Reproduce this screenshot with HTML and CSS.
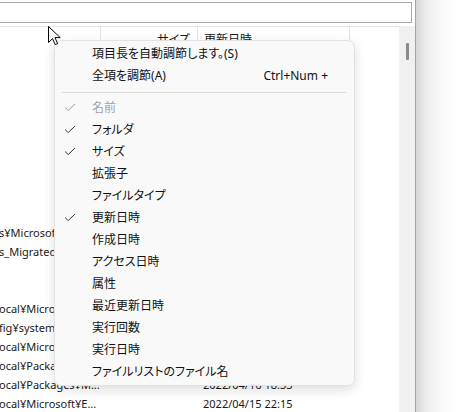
FILE: index.html
```html
<!DOCTYPE html>
<html lang="ja">
<head>
<meta charset="utf-8">
<link rel="stylesheet" href="styles.css">
</head>
<body>
<div class="screen">
  <div class="window">
    <div class="pathbar"></div>
    <div class="listarea">
      <div class="list">
        <div class="header">
          <div class="c-name"></div>
          <div class="c-size">サイズ</div>
          <div class="c-date">更新日時</div>
          <div class="c-extra"></div>
        </div>
        <div class="row"><div class="c-name"></div><div class="c-size"></div><div class="c-date"></div><div class="c-extra"></div></div>
        <div class="row"><div class="c-name"></div><div class="c-size"></div><div class="c-date"></div><div class="c-extra"></div></div>
        <div class="row"><div class="c-name"></div><div class="c-size"></div><div class="c-date"></div><div class="c-extra"></div></div>
        <div class="row"><div class="c-name"></div><div class="c-size"></div><div class="c-date"></div><div class="c-extra"></div></div>
        <div class="row"><div class="c-name"></div><div class="c-size"></div><div class="c-date"></div><div class="c-extra"></div></div>
        <div class="row"><div class="c-name"></div><div class="c-size"></div><div class="c-date"></div><div class="c-extra"></div></div>
        <div class="row"><div class="c-name"></div><div class="c-size"></div><div class="c-date"></div><div class="c-extra"></div></div>
        <div class="row"><div class="c-name"></div><div class="c-size"></div><div class="c-date"></div><div class="c-extra"></div></div>
        <div class="row"><div class="c-name"></div><div class="c-size"></div><div class="c-date"></div><div class="c-extra"></div></div>
        <div class="row"><div class="c-name"><span>s¥Microsoft.W...</span></div><div class="c-size"></div><div class="c-date"></div><div class="c-extra"></div></div>
        <div class="row"><div class="c-name"><span>s_Migrated...</span></div><div class="c-size"></div><div class="c-date"></div><div class="c-extra"></div></div>
        <div class="row"><div class="c-name"></div><div class="c-size"></div><div class="c-date"></div><div class="c-extra"></div></div>
        <div class="row"><div class="c-name"></div><div class="c-size"></div><div class="c-date"></div><div class="c-extra"></div></div>
        <div class="row"><div class="c-name"><span>ocal¥Microsoft¥W...</span></div><div class="c-size"></div><div class="c-date"></div><div class="c-extra"></div></div>
        <div class="row"><div class="c-name"><span>fig¥systemprofile</span></div><div class="c-size"></div><div class="c-date"></div><div class="c-extra"></div></div>
        <div class="row"><div class="c-name"><span>ocal¥Microsoft¥O...</span></div><div class="c-size"></div><div class="c-date"></div><div class="c-extra"></div></div>
        <div class="row"><div class="c-name"><span>ocal¥Packages¥M...</span></div><div class="c-size"></div><div class="c-date"></div><div class="c-extra"></div></div>
        <div class="row"><div class="c-name"><span>ocal¥Packages¥M...</span></div><div class="c-size"></div><div class="c-date">2022/04/16 18:33</div><div class="c-extra"></div></div>
        <div class="row"><div class="c-name"><span>ocal¥Microsoft¥E...</span></div><div class="c-size"></div><div class="c-date">2022/04/15 22:15</div><div class="c-extra"></div></div>
      </div>
      <div class="scrollbar"><div class="thumb"></div></div>
    </div>
  </div>
  <div class="shadow"></div>
</div>

<div class="menu">
  <div class="item"><span class="check"></span><span class="label">項目長を自動調節します。(S)</span></div>
  <div class="item"><span class="check"></span><span class="label">全項を調節(A)</span><span class="key">Ctrl+Num +</span></div>
  <div class="sep"></div>
  <div class="item disabled"><span class="check"><svg viewBox="0 0 12 9" width="12" height="9"><path d="M1 4.5 L4.2 7.6 L11 1" fill="none" stroke="currentColor" stroke-width="1"/></svg></span><span class="label">名前</span></div>
  <div class="item"><span class="check"><svg viewBox="0 0 12 9" width="12" height="9"><path d="M1 4.5 L4.2 7.6 L11 1" fill="none" stroke="currentColor" stroke-width="1"/></svg></span><span class="label">フォルダ</span></div>
  <div class="item"><span class="check"><svg viewBox="0 0 12 9" width="12" height="9"><path d="M1 4.5 L4.2 7.6 L11 1" fill="none" stroke="currentColor" stroke-width="1"/></svg></span><span class="label">サイズ</span></div>
  <div class="item"><span class="check"></span><span class="label">拡張子</span></div>
  <div class="item"><span class="check"></span><span class="label">ファイルタイプ</span></div>
  <div class="item"><span class="check"><svg viewBox="0 0 12 9" width="12" height="9"><path d="M1 4.5 L4.2 7.6 L11 1" fill="none" stroke="currentColor" stroke-width="1"/></svg></span><span class="label">更新日時</span></div>
  <div class="item"><span class="check"></span><span class="label">作成日時</span></div>
  <div class="item"><span class="check"></span><span class="label">アクセス日時</span></div>
  <div class="item"><span class="check"></span><span class="label">属性</span></div>
  <div class="item"><span class="check"></span><span class="label">最近更新日時</span></div>
  <div class="item"><span class="check"></span><span class="label">実行回数</span></div>
  <div class="item"><span class="check"></span><span class="label">実行日時</span></div>
  <div class="item"><span class="check"></span><span class="label">ファイルリストのファイル名</span></div>
</div>

<svg class="cursor" viewBox="0 0 13 20" width="13" height="20"><path d="M0.5 0.5 L0.5 16.5 L4.5 12.6 L7.2 18.6 L9.6 17.6 L7 11.6 L12.2 11.6 Z" fill="#fff" stroke="#000" stroke-width="1" stroke-linejoin="round"/></svg>
</body>
</html>
```

FILE: styles.css
```css
html, body {
  margin: 0;
  padding: 0;
  background: #fff;
}
body {
  width: 467px;
  height: 412px;
  overflow: hidden;
  position: relative;
  font-family: "Noto Sans", "Noto Sans CJK JP", sans-serif;
  font-size: 12px;
  color: #1a1a1a;
  font-feature-settings: "palt";
}
.screen {
  display: flex;
  height: 412px;
}
.window {
  width: 415px;
  border-right: 1px solid #a3a3a3;
  display: flex;
  flex-direction: column;
  background: #fff;
}
.pathbar {
  height: 19px;
  margin: 2px 3px 3px -2px;
  border: 1px solid #a8a8a8;
  background: #fff;
}
.listarea {
  flex: 1;
  display: flex;
  min-height: 0;
}
.list {
  flex: 1;
  overflow: hidden;
}
.scrollbar {
  width: 16px;
  background: #f0f0f0;
  display: flex;
  justify-content: center;
  padding-top: 17px;
}
.thumb {
  width: 3px;
  height: 17px;
  background: #8a8a8a;
  border-radius: 1px;
  margin-left: 1px;
}
.header {
  display: flex;
  height: 25px;
  border-top: 1px solid #e4e4e4;
  align-items: stretch;
}
.header > div {
  border-right: 1px solid #e4e4e4;
  line-height: 25px;
  white-space: nowrap;
}
.header > .c-extra { border-right: none; }
.row {
  display: flex;
  height: 19px;
  line-height: 19px;
  white-space: nowrap;
  font-size: 11px;
}
.c-name {
  width: 100px;
  flex: none;
  overflow: hidden;
}
.c-name span {
  display: block;
  margin-left: -1px;
}
.c-size {
  width: 97px;
  flex: none;
  text-align: right;
  padding-right: 7px;
  box-sizing: border-box;
}
.c-date {
  width: 152px;
  flex: none;
  padding-left: 6px;
  box-sizing: border-box;
}
.c-extra {
  flex: 1;
}
.shadow {
  flex: 1;
  background: linear-gradient(to right, #d6d6d6 0px, #ececec 10px, #f8f8f8 22px, #fff 40px);
}

/* context menu */
.menu {
  position: absolute;
  left: 54px;
  top: 40px;
  width: 299px;
  padding: 1px 0 3px;
  background: #f9f9f9;
  border: 1px solid #e2e2e2;
  border-radius: 7px;
  box-shadow: 0 4px 12px rgba(0, 0, 0, 0.13);
}
.item {
  display: flex;
  align-items: center;
  height: 22px;
  color: #111;
}
.item .check {
  width: 37px;
  flex: none;
  display: flex;
  justify-content: flex-start;
  padding-left: 9px;
  box-sizing: border-box;
  color: #333;
}
.item .check svg { display: block; }
.item .label {
  flex: 1;
  white-space: nowrap;
}
.item .key {
  padding-right: 26px;
  white-space: nowrap;
}
.item.disabled,
.item.disabled .check {
  color: #a2a2a2;
}
.sep {
  height: 1px;
  background: #dcdcdc;
  margin: 6px 8px 3px 7px;
}
.cursor {
  position: absolute;
  left: 48px;
  top: 26px;
}
```
